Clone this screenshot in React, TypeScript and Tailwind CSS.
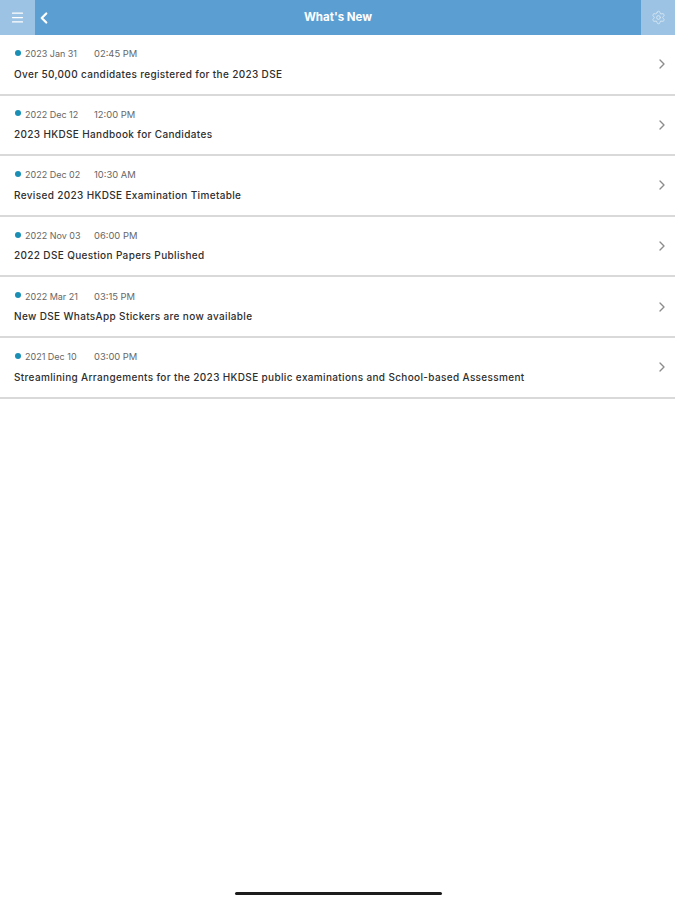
import { ChevronLeft, ChevronRight, Menu, Settings } from "lucide-react";

const newsItems = [
  { date: "2023 Jan 31", time: "02:45 PM", title: "Over 50,000 candidates registered for the 2023 DSE" },
  { date: "2022 Dec 12", time: "12:00 PM", title: "2023 HKDSE Handbook for Candidates" },
  { date: "2022 Dec 02", time: "10:30 AM", title: "Revised 2023 HKDSE Examination Timetable" },
  { date: "2022 Nov 03", time: "06:00 PM", title: "2022 DSE Question Papers Published" },
  { date: "2022 Mar 21", time: "03:15 PM", title: "New DSE WhatsApp Stickers are now available" },
  {
    date: "2021 Dec 10",
    time: "03:00 PM",
    title: "Streamlining Arrangements for the 2023 HKDSE public examinations and School-based Assessment",
  },
];

const App = () => {
  return (
    <div className="flex flex-col w-[675px] h-[900px] bg-white font-['Inter',sans-serif] overflow-hidden">
      <header className="flex h-[35px] shrink-0 items-stretch bg-[#5b9fd2]">
        <div className="flex w-[35px] items-center justify-center bg-[#9cc3e3]">
          <Menu size={15} className="text-white" strokeWidth={2} />
        </div>
        <div className="flex w-[18px] items-center justify-center">
          <ChevronLeft size={18} className="text-white" strokeWidth={3} />
        </div>
        <div className="flex-1 pr-[18px] text-center text-[11.5px] font-bold leading-[35px] text-white">
          What's New
        </div>
        <div className="flex w-[34px] items-center justify-center bg-[#9cc3e3]">
          <Settings size={15} className="text-[#d5e6f3]" strokeWidth={1.5} />
        </div>
      </header>
      <ul className="flex flex-col">
        {newsItems.map((item) => (
          <li
            key={item.date}
            className="flex h-[60.6px] items-center justify-between border-b-2 border-[#d9d9d9] pl-[14px] pr-[5px]"
          >
            <div className="flex flex-col pb-[0.7px]">
              <div className="flex items-center text-[9px] leading-[12px] text-[#666666]">
                <span className="mr-[4px] mb-[3px] ml-[1px] h-[6px] w-[6px] rounded-full bg-[#1a8fb5]" />
                <span className="w-[69px]">{item.date}</span>
                <span className="text-[9.4px]">{item.time}</span>
              </div>
              <div className="mt-[7.3px] text-[10px] font-medium leading-[12px] tracking-[0.35px] text-[#2e2e2e]">
                {item.title}
              </div>
            </div>
            <ChevronRight size={16} className="text-[#8c8c8c]" strokeWidth={2} />
          </li>
        ))}
      </ul>
      <div className="mt-auto mb-[5px] flex justify-center pl-[1px]">
        <div className="h-[3px] w-[207px] rounded-full bg-[#1c1c1c]" />
      </div>
    </div>
  );
};

export default App;
